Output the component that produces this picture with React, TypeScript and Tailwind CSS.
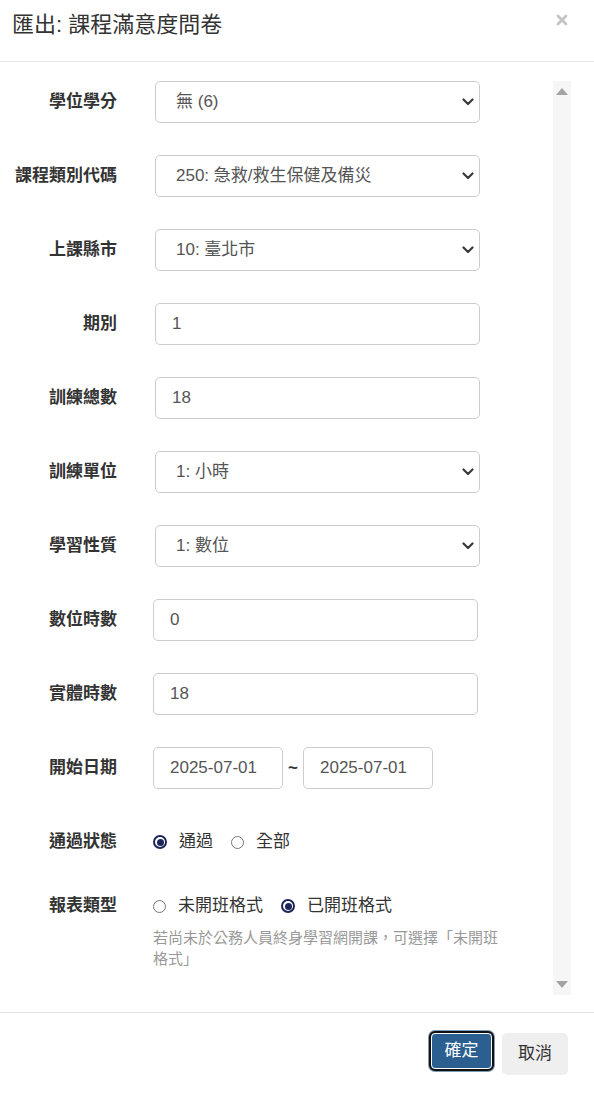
import { X } from 'lucide-react';

const FONT = "font-['Liberation_Sans','Noto_Sans_CJK_TC',sans-serif]";

function Chevron() {
  return (
    <svg className="absolute right-[5px] top-1/2 -translate-y-1/2" width="12" height="8" viewBox="0 0 12 8">
      <path d="M1.5 1.5 L6 6 L10.5 1.5" fill="none" stroke="#3a3a3a" strokeWidth="2.2" strokeLinecap="round" strokeLinejoin="round" />
    </svg>
  );
}

function SelectBox({ value }: { value: string }) {
  return (
    <div className="relative ml-[38px] flex h-[42px] w-[325px] items-center rounded-[5px] border border-[#cccccc] bg-white pl-[20px] text-[17px] text-[#555555]">
      {value}
      <Chevron />
    </div>
  );
}

function TextBox({ value, shift = 0, width = 325 }: { value: string; shift?: number; width?: number }) {
  return (
    <div
      className="flex h-[42px] items-center rounded-[5px] border border-[#cccccc] bg-white pl-[16px] text-[17px] text-[#555555]"
      style={{ marginLeft: 38 + shift, width }}
    >
      {value}
    </div>
  );
}

function Label({ text }: { text: string }) {
  return <div className="w-[117px] shrink-0 text-right text-[17px] font-bold leading-[22px] text-[#333333]">{text}</div>;
}

function Radio({ checked, text }: { checked?: boolean; text: string }) {
  return (
    <div className="flex items-center gap-[12px]">
      {checked ? (
        <span className="flex h-[14px] w-[14px] items-center justify-center rounded-full border-2 border-[#1b2557]">
          <span className="h-[7px] w-[7px] rounded-full bg-[#1b2557]" />
        </span>
      ) : (
        <span className="h-[13px] w-[13px] rounded-full border border-[#767676]" />
      )}
      <span className="text-[17px] leading-[22px] text-[#333333]">{text}</span>
    </div>
  );
}

export default function App() {
  return (
    <div className={`${FONT} w-[594px] bg-white`}>
      {/* header */}
      <div className="flex h-[62px] items-start justify-between border-b border-[#e5e5e5] pl-[12px] pr-[24px] pt-[9px]">
        <h4 className="text-[22px] leading-[32px] text-[#333333]">匯出: 課程滿意度問卷</h4>
        <X className="mt-[3px] text-[#c4c4c4]" size={16} strokeWidth={4} />
      </div>

      {/* body */}
      <div className="flex h-[950px]">
        <div className="flex w-[553px] flex-col gap-[32px] pt-[19px]">
          <div className="flex h-[42px] items-center">
            <Label text="學位學分" />
            <SelectBox value="無 (6)" />
          </div>
          <div className="flex h-[42px] items-center">
            <Label text="課程類別代碼" />
            <SelectBox value="250: 急救/救生保健及備災" />
          </div>
          <div className="flex h-[42px] items-center">
            <Label text="上課縣市" />
            <SelectBox value="10: 臺北市" />
          </div>
          <div className="flex h-[42px] items-center">
            <Label text="期別" />
            <TextBox value="1" />
          </div>
          <div className="flex h-[42px] items-center">
            <Label text="訓練總數" />
            <TextBox value="18" />
          </div>
          <div className="flex h-[42px] items-center">
            <Label text="訓練單位" />
            <SelectBox value="1: 小時" />
          </div>
          <div className="flex h-[42px] items-center">
            <Label text="學習性質" />
            <SelectBox value="1: 數位" />
          </div>
          <div className="flex h-[42px] items-center">
            <Label text="數位時數" />
            <TextBox value="0" shift={-2} />
          </div>
          <div className="flex h-[42px] items-center">
            <Label text="實體時數" />
            <TextBox value="18" shift={-2} />
          </div>
          <div className="flex h-[42px] items-center">
            <Label text="開始日期" />
            <TextBox value="2025-07-01" shift={-2} width={130} />
            <span className="w-[20px] text-center text-[17px] font-bold text-[#333333]">~</span>
            <div className="flex h-[42px] w-[130px] items-center rounded-[5px] border border-[#cccccc] pl-[16px] text-[17px] text-[#555555]">
              2025-07-01
            </div>
          </div>
          <div className="flex h-[42px] items-center">
            <Label text="通過狀態" />
            <div className="ml-[36px] flex items-center gap-[18px]">
              <Radio checked text="通過" />
              <Radio text="全部" />
            </div>
          </div>
          <div className="flex items-start">
            <Label text="報表類型" />
            <div className="ml-[36px] flex flex-col">
              <div className="flex items-center gap-[18px]">
                <Radio text="未開班格式" />
                <Radio checked text="已開班格式" />
              </div>
              <p className="mt-[10px] w-[350px] text-[15px] leading-[21px] text-[#999999]">
                若尚未於公務人員終身學習網開課，可選擇「未開班格式」
              </p>
            </div>
          </div>
        </div>

        {/* scrollbar */}
        <div className="mt-[19px] flex h-[914px] w-[18px] flex-col items-center justify-between bg-[#f6f6f6] py-[6px]">
          <svg width="12" height="8" viewBox="0 0 12 8">
            <path d="M0 8 L6 1 L12 8 Z" fill="#a3a3a3" />
          </svg>
          <svg width="12" height="8" viewBox="0 0 12 8">
            <path d="M0 0 L6 7 L12 0 Z" fill="#a3a3a3" />
          </svg>
        </div>
      </div>

      {/* footer */}
      <div className="flex items-start justify-end gap-[10px] border-t border-[#e5e5e5] pb-[20px] pr-[26px] pt-[20px]">
        <button className="h-[36px] w-[61px] rounded-[4px] border border-white bg-[#2a5f8f] text-[17px] text-white shadow-[0_0_0_3px_#7f9bb6] outline-2 outline-[#101010]">
          確定
        </button>
        <button className="h-[42px] w-[66px] rounded-[5px] bg-[#efefef] text-[17px] text-[#333333]">取消</button>
      </div>
    </div>
  );
}
